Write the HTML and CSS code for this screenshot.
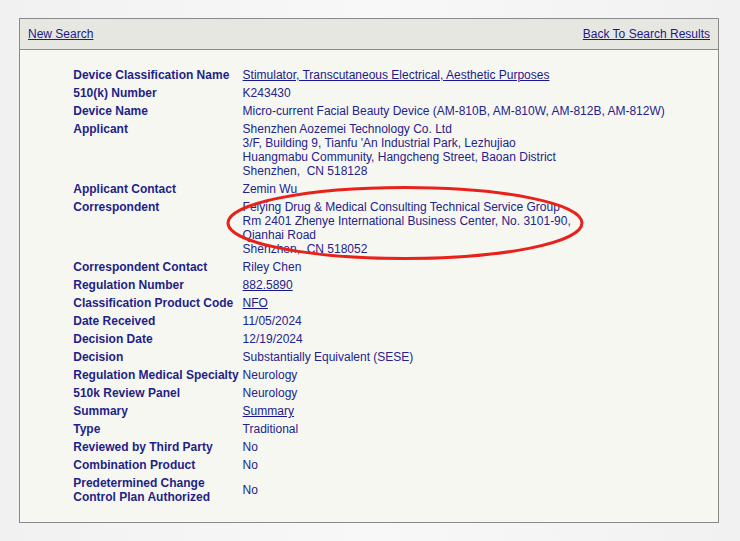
FILE: index.html
```html
<!DOCTYPE html>
<html>
<head>
<meta charset="utf-8">
<link rel="stylesheet" href="styles.css">
</head>
<body>
<div class="page">
  <div class="box">
    <div class="bar">
      <a href="#">New Search</a>
      <a href="#">Back To Search Results</a>
    </div>
    <div class="content">
      <table class="details">
        <tr><th>Device Classification Name</th><td><a href="#">Stimulator, Transcutaneous Electrical, Aesthetic Purposes</a></td></tr>
        <tr><th>510(k) Number</th><td>K243430</td></tr>
        <tr><th>Device Name</th><td>Micro-current Facial Beauty Device (AM-810B, AM-810W, AM-812B, AM-812W)</td></tr>
        <tr><th>Applicant</th><td>Shenzhen Aozemei Technology Co. Ltd<br>3/F, Building 9, Tianfu 'An Industrial Park, Lezhujiao<br>Huangmabu Community, Hangcheng Street, Baoan District<br>Shenzhen,&nbsp; CN 518128</td></tr>
        <tr><th>Applicant Contact</th><td>Zemin Wu</td></tr>
        <tr><th>Correspondent</th><td class="mark">Feiying Drug &amp; Medical Consulting Technical Service Group<br>Rm 2401 Zhenye International Business Center, No. 3101-90,<br>Qianhai Road<br>Shenzhen,&nbsp; CN 518052<svg class="ellipse" width="370" height="80" viewBox="0 0 370 80"><ellipse cx="184" cy="39" rx="177" ry="35.5" fill="none" stroke="#e8221b" stroke-width="3"/></svg></td></tr>
        <tr><th>Correspondent Contact</th><td>Riley Chen</td></tr>
        <tr><th>Regulation Number</th><td><a href="#">882.5890</a></td></tr>
        <tr><th>Classification Product Code</th><td><a href="#">NFO</a></td></tr>
        <tr><th>Date Received</th><td>11/05/2024</td></tr>
        <tr><th>Decision Date</th><td>12/19/2024</td></tr>
        <tr><th>Decision</th><td>Substantially Equivalent (SESE)</td></tr>
        <tr><th>Regulation Medical Specialty</th><td>Neurology</td></tr>
        <tr><th>510k Review Panel</th><td>Neurology</td></tr>
        <tr><th>Summary</th><td><a href="#">Summary</a></td></tr>
        <tr><th>Type</th><td>Traditional</td></tr>
        <tr><th>Reviewed by Third Party</th><td>No</td></tr>
        <tr><th>Combination Product</th><td>No</td></tr>
        <tr><th>Predetermined Change<br>Control Plan Authorized</th><td>No</td></tr>
      </table>
    </div>
  </div>
</div>
</body>
</html>
```
FILE: styles.css
```css
html, body {
  margin: 0;
  padding: 0;
}
body {
  width: 740px;
  height: 541px;
  overflow: hidden;
  background: linear-gradient(to right, #f1f1f1 0%, #f8f8f8 50%, #f1f1f1 100%);
  font-family: "Liberation Sans", Arial, sans-serif;
  font-size: 12px;
  color: #23238c;
}
.page {
  padding: 18px 0 0 19px;
}
.box {
  width: 698px;
  border: 1px solid #8a8a8a;
  background: #f7f7f2;
}
.bar {
  height: 30px;
  background: #e7e7e1;
  border-bottom: 1px solid #8a8a8a;
  display: flex;
  justify-content: space-between;
  align-items: center;
  padding: 0 8px;
}
a {
  color: #1a1a8c;
  text-decoration: underline;
}
.content {
  padding: 16px 0 16px 0;
}
.details {
  margin: 0 auto;
  border-collapse: collapse;
  border-spacing: 0;
}
.details th, .details td {
  padding: 2px;
  line-height: 14px;
  text-align: left;
  white-space: nowrap;
}
.details th {
  font-weight: bold;
  vertical-align: top;
  color: #1f1f88;
}
.details td {
  vertical-align: middle;
}
.mark {
  position: relative;
}
.ellipse {
  position: absolute;
  left: -20px;
  top: -14px;
  overflow: visible;
}
```
